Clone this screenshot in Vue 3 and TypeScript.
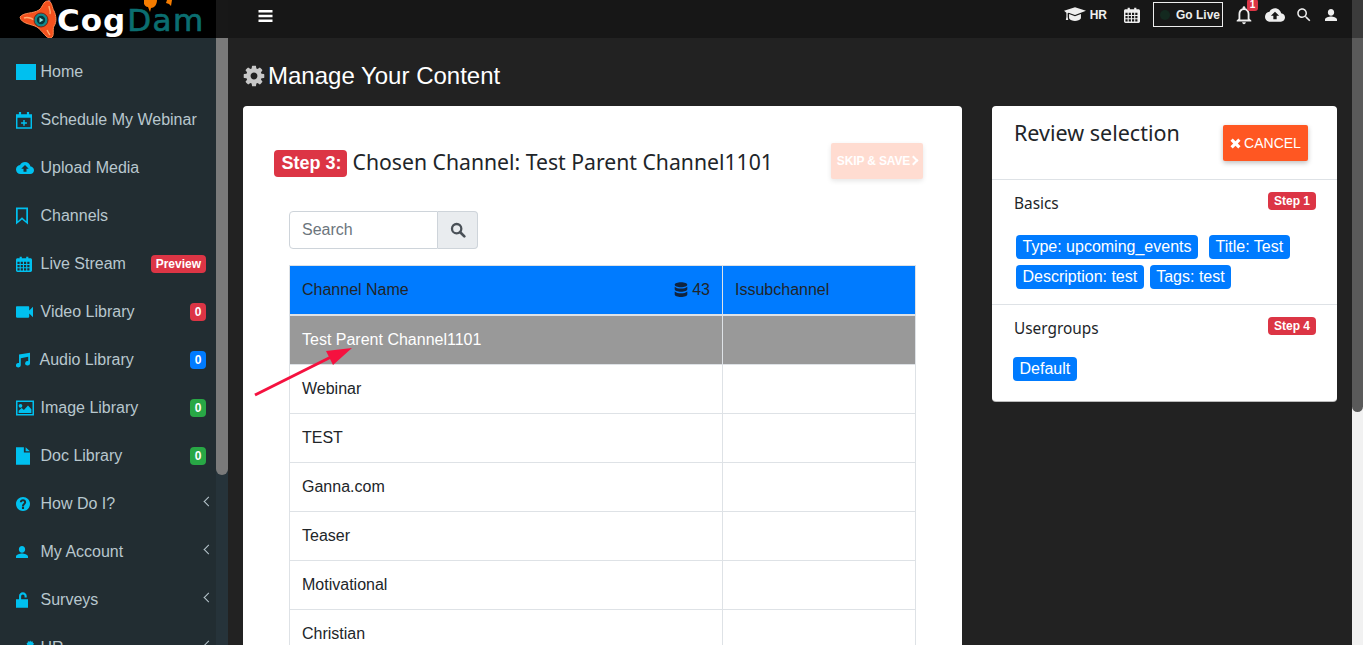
<template>
  <div class="app">
    <aside class="sidebar">
      <div class="logo">
        <svg class="logo-mark" viewBox="0 0 40 38" width="40" height="38">
          <path d="M29 0l2-2 1 8-2 1z" fill="#6a4a8a" />
          <path d="M1 17C5 12 14 14 20 10 24 7 24 1 29 1c4 0 4 7 6 10 2 4 3 11 0 15-2 4 1 10-3 12-5 1-8-7-14-11C13 24 2 24 1 17z" fill="#f4511e" stroke="#ff8a50" stroke-width="1" />
          <path d="M5 18c5-2 9 1 12 3M30 6c0 3 2 5 1 8M28 30c1 2 2 4 3 5" stroke="#ffab70" stroke-width="1.400" fill="none" />
          <circle cx="22" cy="20" r="7" fill="#11898c" stroke="#7a1f10" stroke-width="1" />
          <circle cx="22" cy="20" r="4.200" fill="#06363a" />
          <path d="M20.500 17.500l4 2.500-4 2.500z" fill="#8fe6e6" />
        </svg>
        <span class="logo-text"><span class="cog">Cog</span><span class="dam">Dam</span></span>
        <svg class="logo-chat" viewBox="0 0 30 14" width="30" height="14">
          <path d="M0 0h13c0 5-3 8-6 8L6 12 4 7C1 7-1 4 0 0z" fill="#f57c00" />
          <path d="M23 0h5l-1 6-2-2-3-1z" fill="#f57c00" />
        </svg>
      </div>
      <ul class="nav">
        <li v-for="item in navItems" :key="item.label" class="nav-item">
          <span class="nav-icon">
            <span v-if="item.icon === 'square'" class="home-square"></span>
            <svg v-else :viewBox="icons[item.icon].box" class="nav-svg" :style="{ width: icons[item.icon].w + 'px' }">
              <path :d="icons[item.icon].d" fill="currentColor" fill-rule="evenodd" />
            </svg>
          </span>
          <span class="nav-label" :class="{ tight: item.icon === 'music' }">{{ item.label }}</span>
          <span v-if="item.badge" class="nav-badge" :class="[item.tone, { digit: item.badge === '0' }]">{{ item.badge }}</span>
          <span v-if="item.caret" class="caret"></span>
        </li>
      </ul>
      <div class="side-scroll"><div class="side-thumb"></div></div>
    </aside>

    <div class="page">
      <header class="topbar">
        <svg class="burger" viewBox="0 0 14 12" width="15" height="12">
          <path d="M0 0h14v2.600H0zM0 4.700h14v2.600H0zM0 9.400h14V12H0z" fill="#fff" />
        </svg>
        <div class="top-tools">
          <svg viewBox="0 0 24 16" width="22" height="15" class="cap">
            <path d="M12 0l12 4-12 4.500L5 6l-1 .5v4.300l.6 3.200H2l.6-3.200V6L0 4zM5.500 7.500L12 10l6.500-2.500V12c-1 2-4 3-6.500 3s-5.500-1-6.500-3z" fill="#eee" fill-rule="evenodd" />
          </svg>
          <span class="hr">HR</span>
          <svg :viewBox="icons.calendar.box" width="16" height="18" class="top-cal"><path :d="icons.calendar.d" fill="#eee" fill-rule="evenodd" /></svg>
          <div class="go-live"><span class="dot"></span>Go Live</div>
          <div class="bell">
            <svg viewBox="0 0 24 24" width="22" height="22"><path :d="icons.bell.d" fill="#eee" /></svg>
            <span class="bell-count">1</span>
          </div>
          <svg viewBox="0 0 24 24" width="20" height="20" class="top-cloud"><path :d="icons.cloud.d" fill="#eee" /></svg>
          <svg viewBox="0 0 24 24" width="18" height="18" class="top-search"><path :d="icons.search.d" fill="#eee" /></svg>
          <svg viewBox="0 0 24 24" width="18" height="18" class="top-user"><path :d="icons.user.d" fill="#eee" /></svg>
        </div>
      </header>

      <h1 class="page-title">
        <svg viewBox="0 0 1792 1792" width="24" height="24"><path :d="gear" fill="#c8c8c8" /></svg>
        Manage Your Content
      </h1>

      <div class="columns">
        <section class="card main-card">
          <div class="step-row">
            <span class="step-badge">Step 3:</span>
            <h2 class="chosen">Chosen Channel: Test Parent Channel1101</h2>
            <button class="skip">SKIP &amp; SAVE<span class="chev"></span></button>
          </div>
          <div class="search">
            <div class="search-input">Search</div>
            <div class="search-btn">
              <svg viewBox="0 0 24 24" width="16" height="16">
                <circle cx="10" cy="10" r="7" fill="none" stroke="#495057" stroke-width="3.400" />
                <path d="M15 15l6.500 6.500" stroke="#495057" stroke-width="4" stroke-linecap="round" />
              </svg>
            </div>
          </div>
          <table class="channels">
            <thead>
              <tr>
                <th>
                  <div class="th-inner">
                    <span>Channel Name</span>
                    <span class="count">
                      <svg viewBox="0 0 20 22" width="14" height="16">
                        <path d="M10 0c5 0 9 1.500 9 3.500S15 7 10 7 1 5.500 1 3.500 5 0 10 0zM1 6.500C3 8.500 6.500 9 10 9s7-.5 9-2.500V10c0 2-4 3.500-9 3.500S1 12 1 10zM1 13c2 2 5.500 2.500 9 2.500s7-.5 9-2.500v4.500c0 2-4 3.500-9 3.500s-9-1.500-9-3.500z" fill="#10243f" />
                      </svg>
                      43
                    </span>
                  </div>
                </th>
                <th>Issubchannel</th>
              </tr>
            </thead>
            <tbody>
              <tr v-for="(name, i) in channels" :key="name" :class="{ selected: i === 0 }">
                <td>{{ name }}</td>
                <td></td>
              </tr>
            </tbody>
          </table>
        </section>

        <aside class="card review">
          <div class="review-head">
            <h3>Review selection</h3>
            <button class="cancel">
              <svg viewBox="0 0 12 12" width="11" height="11"><path d="M3 .5L6 3.500 9 .5 11.500 3 8.500 6l3 3L9 11.500l-3-3-3 3L.5 9l3-3-3-3z" fill="#fff" /></svg>
              CANCEL
            </button>
          </div>
          <div class="review-block">
            <div class="block-head"><span>Basics</span><span class="mini-step">Step 1</span></div>
            <div class="tags basics">
              <span v-for="tag in basics" :key="tag" class="tag">{{ tag }}</span>
            </div>
          </div>
          <div class="review-block">
            <div class="block-head"><span>Usergroups</span><span class="mini-step">Step 4</span></div>
            <div class="tags groups"><span class="tag">Default</span></div>
          </div>
        </aside>
      </div>
    </div>

    <div class="page-scroll"><div class="page-thumb"></div></div>

    <svg class="arrow" viewBox="0 0 110 60" width="110" height="60">
      <path d="M2 51L80 12" stroke="#f5113f" stroke-width="3" />
      <path d="M99 4L73 7l7 14z" fill="#f5113f" />
    </svg>
  </div>
</template>

<script setup lang="ts">
interface IconDef {
  box: string
  d: string
  w: number
}

interface NavItem {
  label: string
  icon: string
  badge?: string
  tone?: string
  caret?: boolean
}

const calendarPath =
  'M2 3h3V1h3v2h6V1h3v2h3c1 0 2 1 2 2v15c0 1-1 2-2 2H2c-1 0-2-1-2-2V5c0-1 1-2 2-2zM2 8v3h3V8zm4.500 0v3h3V8zm4.500 0v3h3V8zm4.500 0v3h3V8zM2 12.500v3h3v-3zm4.500 0v3h3v-3zm4.500 0v3h3v-3zm4.500 0v3h3v-3zM2 17v3h3v-3zm4.500 0v3h3v-3zm4.500 0v3h3v-3zm4.500 0v3h3v-3z'

const icons: Record<string, IconDef> = {
  schedule: {
    box: '0 0 22 24',
    w: 16,
    d: 'M0 4h4V1h3v3h8V1h3v3h4v20H0zM2 9v13h18V9zM10 12h2v3h3v2h-3v3h-2v-3H7v-2h3z',
  },
  cloud: {
    box: '0 0 24 24',
    w: 18,
    d: 'M19.350 10.040C18.670 6.590 15.640 4 12 4 9.110 4 6.600 5.640 5.350 8.040 2.340 8.360 0 10.910 0 14c0 3.310 2.690 6 6 6h13c2.760 0 5-2.240 5-5 0-2.640-2.050-4.780-4.650-4.960zM14 13v4h-4v-4H7l5-5 5 5h-3z',
  },
  bookmark: {
    box: '0 0 14 20',
    w: 12,
    d: 'M0 0h14v20l-7-6-7 6zM2 2v14l5-4.500 5 4.500V2z',
  },
  calendar: { box: '0 0 22 22', w: 16, d: calendarPath },
  video: {
    box: '3 6 18 12',
    w: 17,
    d: 'M17 10.500V7c0-.55-.45-1-1-1H4c-.55 0-1 .45-1 1v10c0 .55.45 1 1 1h12c.55 0 1-.45 1-1v-3.500l4 4v-11l-4 4z',
  },
  music: {
    box: '3 2 19 20',
    w: 14,
    d: 'M22 2v14.500a3.300 3 0 1 1-2.400-2.800V7.500L9.500 9.500V19a3.300 3 0 1 1-2.400-2.800V4.500z',
  },
  image: {
    box: '0 0 24 20',
    w: 18,
    d: 'M0 0h24v20H0zM2 2v16h20V2zM6 4.500a2.500 2.500 0 1 1 0 5 2.500 2.500 0 0 1 0-5zM3.500 16.500v-3l4-3.500 3 2.500 5.500-6 4.500 5v5z',
  },
  doc: {
    box: '0 0 16 20',
    w: 14,
    d: 'M0 0h9v6h7v14H0zM11 0l5 4.500h-5z',
  },
  help: {
    box: '2 2 20 20',
    w: 14,
    d: 'M12 2C6.480 2 2 6.480 2 12s4.480 10 10 10 10-4.480 10-10S17.520 2 12 2zm1.500 17h-3v-2.600h3zm2.200-7.200l-.9.900c-.9.800-1.300 1.500-1.300 2.900h-3V15c0-1.200.5-2.300 1.200-3l1.300-1.300c.4-.3.600-.700.600-1.200 0-.8-.7-1.500-1.600-1.500s-1.600.7-1.600 1.500H7.500c0-2.300 2-4.200 4.500-4.200s4.500 1.900 4.500 4.200c0 .9-.3 1.600-.8 2.300z',
  },
  user: {
    box: '4 4 16 16',
    w: 12,
    d: 'M12 13c2.500 0 4.200-2.200 4.200-4.500S14.500 4 12 4 7.800 6.200 7.800 8.500 9.500 13 12 13zm0 1c-2.670 0-8 1.340-8 4v2h16v-2c0-2.660-5.330-4-8-4z',
  },
  unlock: {
    box: '0 0 14 18',
    w: 12,
    d: 'M0 8h3.500V4.500C3.500 2 5.500 0 8 0s4.500 2 4.500 4.500V6h-2.500V4.500c0-1.100-.9-2-2-2s-2 .9-2 2V8H14v10H0z',
  },
  cogs: {
    box: '0 0 24 20',
    w: 18,
    d: 'M8 6l1.500 2 2.500-.5 1 2.500 2 1-1 2.500 1 2-2 1.500-.5 2.500H5l-.5-2.500-2-1.500 1-2-1-2.500 2-1 1-2.500 2 .5zM19 0l1 1.500 2-.5.5 2 1.500 1-1 1.500 1 1.500-1.500 1-.5 2-2-.5-1 1.500-1-1.500-2 .5-.5-2L14 7l1-1.500L14 4l1.500-1 .5-2 2 .5z',
  },
  bell: {
    box: '0 0 24 24',
    w: 22,
    d: 'M12 22c1.100 0 2-.9 2-2h-4c0 1.100.89 2 2 2zm6-6v-5c0-3.070-1.640-5.640-4.500-6.320V4c0-.83-.67-1.500-1.500-1.500s-1.500.67-1.500 1.500v.68C7.630 5.360 6 7.920 6 11v5l-2 2v1h16v-1l-2-2zm-2 1H8v-6c0-2.480 1.510-4.500 4-4.500s4 2.020 4 4.500v6z',
  },
  search: {
    box: '0 0 24 24',
    w: 18,
    d: 'M15.500 14h-.79l-.28-.27C15.410 12.590 16 11.110 16 9.500 16 5.910 13.090 3 9.500 3S3 5.910 3 9.500 5.910 16 9.500 16c1.610 0 3.090-.59 4.230-1.570l.27.28v.79l5 4.990L20.490 19l-4.990-5zm-6 0C7.010 14 5 11.990 5 9.500S7.010 5 9.500 5 14 7.010 14 9.500 11.990 14 9.500 14z',
  },
}

const gear =
  'M1152 896q0-106-75-181t-181-75-181 75-75 181 75 181 181 75 181-75 75-181zm512-109v222q0 12-8 23t-20 13l-185 28q-19 54-39 91 35 50 107 138 10 12 10 25t-9 23q-27 37-99 108t-94 71q-12 0-26-9l-138-108q-44 23-91 38-16 136-29 186-7 28-36 28h-222q-14 0-24.500-8.500t-11.500-21.500l-28-184q-49-16-90-37l-141 107q-10 9-25 9-14 0-25-11-126-114-165-168-7-10-7-23 0-12 8-23 15-21 51-66.500t54-70.500q-27-50-41-99l-183-27q-13-2-21-12.500t-8-23.500v-222q0-12 8-23t19-13l186-28q14-46 39-92-40-57-107-138-10-12-10-24 0-10 9-23 26-36 98.500-107.500t94.500-71.500q13 0 26 10l138 107q44-23 91-38 16-136 29-186 7-28 36-28h222q14 0 24.500 8.500t11.500 21.500l28 184q49 16 90 37l142-107q9-9 24-9 13 0 25 10 129 119 165 170 7 8 7 22 0 12-8 23-15 21-51 66.500t-54 70.500q26 50 41 98l183 28q13 2 21 12.500t8 23.500z'

const navItems: NavItem[] = [
  { label: 'Home', icon: 'square' },
  { label: 'Schedule My Webinar', icon: 'schedule' },
  { label: 'Upload Media', icon: 'cloud' },
  { label: 'Channels', icon: 'bookmark' },
  { label: 'Live Stream', icon: 'calendar', badge: 'Preview', tone: 'red' },
  { label: 'Video Library', icon: 'video', badge: '0', tone: 'red' },
  { label: 'Audio Library', icon: 'music', badge: '0', tone: 'blue' },
  { label: 'Image Library', icon: 'image', badge: '0', tone: 'green' },
  { label: 'Doc Library', icon: 'doc', badge: '0', tone: 'green' },
  { label: 'How Do I?', icon: 'help', caret: true },
  { label: 'My Account', icon: 'user', caret: true },
  { label: 'Surveys', icon: 'unlock', caret: true },
  { label: 'HR', icon: 'cogs', caret: true },
]

const channels = ['Test Parent Channel1101', 'Webinar', 'TEST', 'Ganna.com', 'Teaser', 'Motivational', 'Christian']
const basics = ['Type: upcoming_events', 'Title: Test', 'Description: test', 'Tags: test']
</script>

<style>
html,
body {
  margin: 0;
  height: 100%;
  overflow: hidden;
  background: #222;
}
</style>

<style scoped>
.app {
  position: relative;
  display: grid;
  grid-template-columns: 228px 1fr 11px;
  height: 645px;
  overflow: hidden;
  background: #222;
  font-family: "Liberation Sans", Arial, sans-serif;
  font-size: 16px;
}

/* sidebar */
.sidebar {
  position: relative;
  background: #222d32;
  overflow: hidden;
  height: 645px;
}
.logo {
  position: relative;
  display: flex;
  align-items: center;
  height: 38px;
  background: #000;
  padding-left: 19px;
  box-sizing: border-box;
  box-shadow: inset -12px 0 0 #181818;
  overflow: hidden;
}
.logo-mark {
  flex: none;
}
.logo-text {
  margin-left: -2px;
  font-family: "DejaVu Sans", Verdana, sans-serif;
  font-size: 31px;
  line-height: 38px;
  padding-top: 1px;
  white-space: nowrap;
}
.cog {
  color: #fff;
  font-weight: 700;
  letter-spacing: 1px;
}
.dam {
  color: #0b6e70;
  margin-left: 1px;
  letter-spacing: 1.500px;
  -webkit-text-stroke: 0.700px #0b6e70;
}
.logo-chat {
  position: absolute;
  left: 144px;
  top: 0;
}
.nav {
  list-style: none;
  margin: 10px 0 0;
  padding: 0 22px 0 16px;
}
.nav-item {
  display: flex;
  align-items: center;
  height: 48px;
  color: #b8c7ce;
  white-space: nowrap;
}
.nav-icon {
  display: flex;
  align-items: center;
  width: 24.500px;
  flex: none;
  color: #00c0ef;
}
.home-square {
  width: 20px;
  height: 16px;
  background: #00c0ef;
}
.nav-svg {
  display: block;
  height: 18px;
}
.nav-label {
  flex: 1;
}
.nav-label.tight {
  margin-left: -1px;
}
.nav-badge {
  font-size: 12px;
  font-weight: 700;
  color: #fff;
  line-height: 18px;
  padding: 0 5px;
  border-radius: 4px;
}
.nav-badge.digit {
  padding: 0 4.500px;
}
.nav-badge.red {
  background: #dc3545;
}
.nav-badge.blue {
  background: #007bff;
}
.nav-badge.green {
  background: #28a745;
}
.caret {
  width: 6px;
  height: 6px;
  margin: -5px -6px 0 0;
  border-left: 1.500px solid #b8c7ce;
  border-bottom: 1.500px solid #b8c7ce;
  transform: rotate(45deg);
}
.side-scroll {
  position: absolute;
  top: 38px;
  right: 0;
  bottom: 0;
  width: 12px;
  background: #26333a;
}
.side-thumb {
  height: 437px;
  background: #7a7a7a;
  border-radius: 0 0 6px 6px;
}

/* top bar */
.page {
  min-width: 0;
  height: 645px;
  overflow: hidden;
}
.topbar {
  display: flex;
  align-items: center;
  justify-content: space-between;
  height: 38px;
  padding: 0 12px 0 30px;
  background: #171717;
  box-sizing: border-box;
}
.burger {
  margin-top: -6px;
}
.top-tools {
  display: flex;
  align-items: center;
  color: #eee;
  margin-top: -9px;
}
.hr {
  font-size: 12px;
  font-weight: 700;
  margin-left: 4px;
}
.top-cal {
  margin-left: 17px;
}
.go-live {
  display: flex;
  align-items: center;
  width: 68px;
  height: 23px;
  margin-left: 13px;
  border: 1px solid #eee;
  font-size: 12px;
  font-weight: 700;
}
.dot {
  width: 10px;
  height: 10px;
  margin: 0 6px 0 6px;
  border-radius: 50%;
  background: #13291f;
}
.bell {
  position: relative;
  margin-left: 10px;
  display: flex;
}
.bell-count {
  position: absolute;
  top: -5px;
  right: -3px;
  min-width: 9px;
  padding: 0 1px;
  background: #dc3545;
  border-radius: 3px;
  color: #fff;
  font-size: 10px;
  font-weight: 700;
  line-height: 12px;
  text-align: center;
}
.top-cloud {
  margin-left: 10px;
}
.top-search {
  margin-left: 10px;
}
.top-user {
  margin-left: 9px;
}

/* content */
.page-title {
  display: flex;
  align-items: center;
  gap: 2px;
  margin: 0;
  padding: 8px 0 0 14px;
  height: 60px;
  color: #fff;
  font-size: 24px;
  font-weight: 400;
  line-height: 28px;
}
.columns {
  display: flex;
  align-items: flex-start;
  gap: 30px;
  padding: 0 15px;
}
.card {
  background: #fff;
  border-radius: 4px;
  box-shadow: 0 1px 0 #bbb;
}
.main-card {
  width: 719px;
  flex: none;
  box-sizing: border-box;
  padding: 37px 39px 40px 31px;
}
.step-row {
  display: flex;
  align-items: center;
  height: 36px;
}
.step-badge {
  background: #dc3545;
  color: #fff;
  font-weight: 700;
  font-size: 18px;
  line-height: 27px;
  padding: 0 5px 0 7.500px;
  border-radius: 4px;
  margin: 4px 6px 0 0;
}
.chosen {
  margin: 0;
  flex: 1;
  font-family: "Noto Sans", sans-serif;
  font-weight: 400;
  font-size: 21.200px;
  color: #212529;
}
.skip {
  width: 92px;
  height: 36px;
  border: 0;
  border-radius: 2px;
  background: #ffdcd1;
  color: #fff;
  font-family: "Liberation Sans", sans-serif;
  font-size: 12px;
  font-weight: 700;
  padding: 0;
  white-space: nowrap;
  letter-spacing: -0.150px;
  box-shadow: 0 2px 5px rgba(0, 0, 0, 0.1);
}
.chev {
  display: inline-block;
  width: 5px;
  height: 5px;
  margin: 0 0 1px 0;
  border-top: 2px solid #fff;
  border-right: 2px solid #fff;
  transform: rotate(45deg);
}
.search {
  display: flex;
  width: 189px;
  height: 38px;
  margin: 32px 0 16px 15px;
}
.search-input {
  flex: 1;
  box-sizing: border-box;
  padding-left: 12px;
  border: 1px solid #ced4da;
  border-radius: 4px 0 0 4px;
  color: #6c757d;
  line-height: 35px;
}
.search-btn {
  display: flex;
  align-items: center;
  justify-content: center;
  width: 40px;
  box-sizing: border-box;
  background: #e9ecef;
  border: 1px solid #ced4da;
  border-left: 0;
  border-radius: 0 4px 4px 0;
}
.channels {
  width: 627px;
  margin-left: 15px;
  border-collapse: collapse;
  table-layout: fixed;
  color: #212529;
}
.channels th,
.channels td {
  height: 49px;
  padding: 0 12px;
  box-sizing: border-box;
  border: 1px solid #dee2e6;
  text-align: left;
  font-weight: 400;
}
.channels th:first-child {
  width: 433px;
}
.channels th {
  background: #007bff;
  border-bottom-width: 2px;
}
.th-inner {
  display: flex;
  justify-content: space-between;
}
.count {
  display: flex;
  align-items: center;
  gap: 4px;
}
.channels .selected td {
  height: 50px;
  background: #999;
  color: #fff;
}
.review {
  width: 345px;
  flex: none;
}
.review-head {
  display: flex;
  justify-content: space-between;
  height: 74px;
  padding: 0 29px 0 22px;
  box-sizing: border-box;
  border-bottom: 1px solid #dee2e6;
}
.review-head h3 {
  margin: 12px 0 0;
  font-family: "Noto Sans", sans-serif;
  font-size: 21.500px;
  font-weight: 400;
  color: #212529;
}
.cancel {
  display: flex;
  align-items: center;
  justify-content: center;
  gap: 3px;
  align-self: flex-start;
  width: 85px;
  height: 36px;
  margin-top: 19px;
  padding: 0;
  border: 0;
  border-radius: 2px;
  background: #ff5722;
  color: #fff;
  font-family: "Liberation Sans", sans-serif;
  font-size: 14px;
  box-shadow: 0 2px 5px rgba(0, 0, 0, 0.25);
}
.review-block {
  padding: 13px 21px 0 22px;
}
.review-block + .review-block {
  border-top: 1px solid #dee2e6;
}
.block-head {
  display: flex;
  justify-content: space-between;
  align-items: flex-start;
  font-family: "Noto Sans", sans-serif;
  font-size: 15.400px;
  color: #212529;
}
.mini-step {
  margin-top: -1px;
  background: #dc3545;
  color: #fff;
  font-family: "Liberation Sans", sans-serif;
  font-size: 12px;
  font-weight: 700;
  line-height: 18px;
  padding: 0 6px;
  border-radius: 4px;
}
.tags {
  display: flex;
  flex-wrap: wrap;
}
.tags.basics {
  gap: 6px;
  margin: 21px 0 15px 2px;
}
.tags.groups {
  margin: 18px 0 20px -1px;
}
.tag {
  background: #007bff;
  color: #fff;
  line-height: 24px;
  padding: 0 6.500px;
  border-radius: 4px;
}
.basics .tag:nth-child(2) {
  margin-left: 5px;
}

/* page scrollbar */
.page-scroll {
  background: #f1f1f1;
}
.page-thumb {
  height: 412px;
  background: linear-gradient(#3b3b3b 38px, #5a5a5a 38px);
  border-radius: 0 0 6px 6px;
}
.arrow {
  position: absolute;
  left: 253px;
  top: 344px;
}
</style>
